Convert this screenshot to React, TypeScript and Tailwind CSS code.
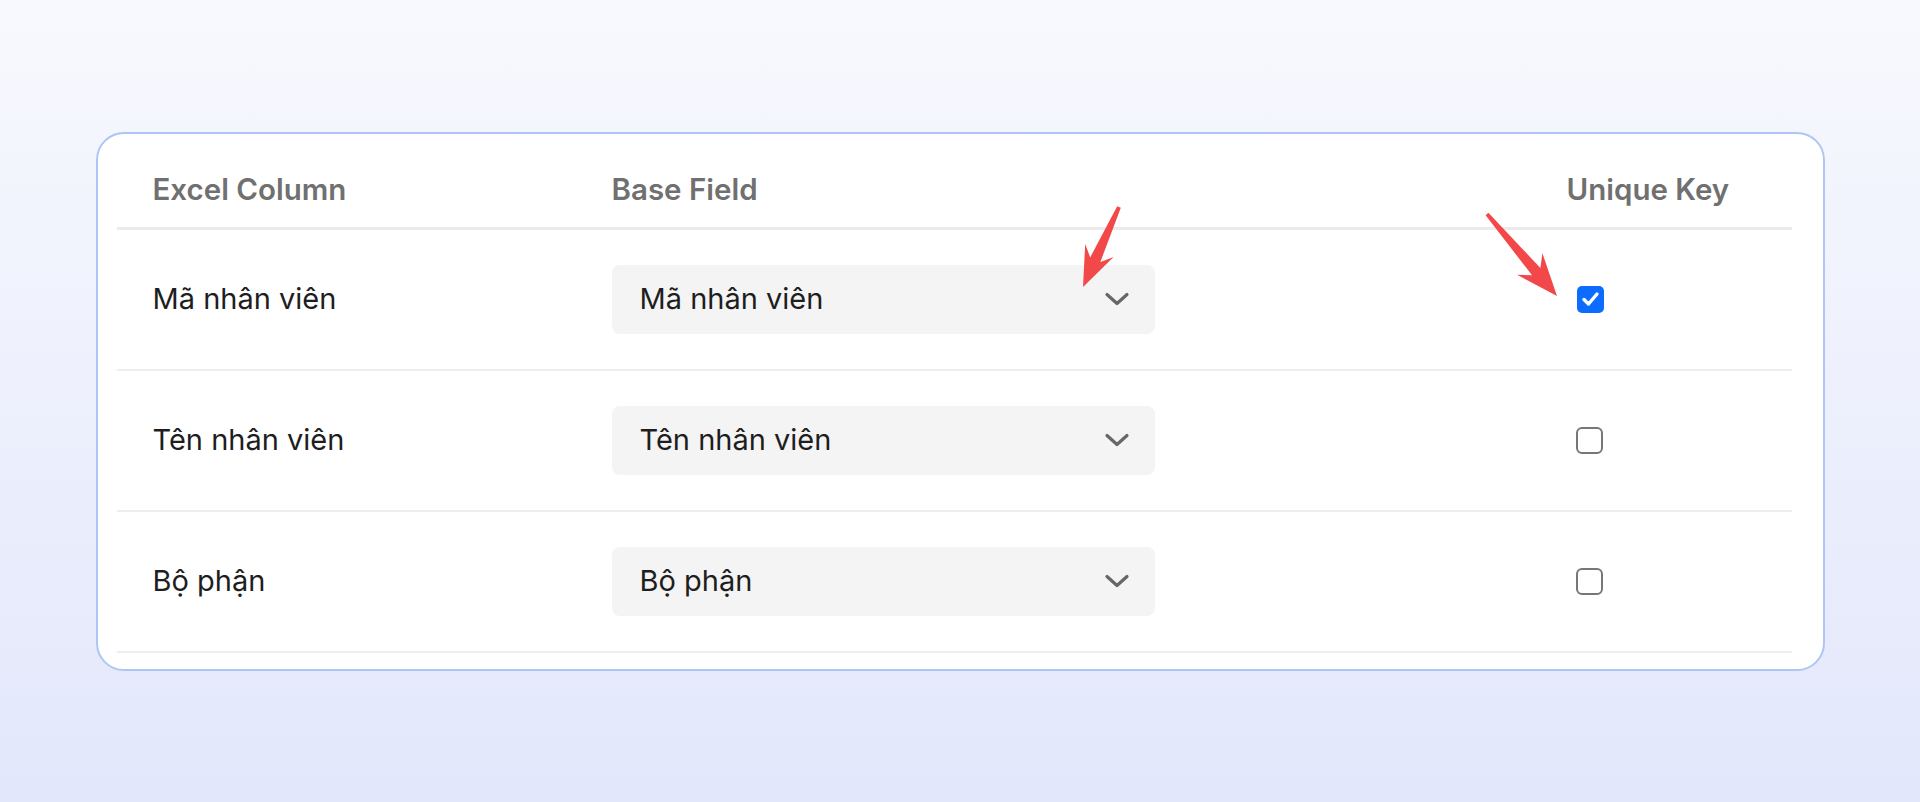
const rows = [
  { column: "Mã nhân viên", field: "Mã nhân viên", unique: true },
  { column: "Tên nhân viên", field: "Tên nhân viên", unique: false },
  { column: "Bộ phận", field: "Bộ phận", unique: false },
];

const cols = "grid grid-cols-[459px_955px_1fr]";

function Chevron() {
  return (
    <svg width="26" height="14" viewBox="0 0 26 14" fill="none" className="shrink-0">
      <polyline points="3,2.5 13,11.5 23,2.5" stroke="#676767" strokeWidth="3.2" strokeLinecap="round" strokeLinejoin="round" />
    </svg>
  );
}

function Checkbox({ checked }: { checked: boolean }) {
  if (checked) {
    return (
      <span className="ml-[10px] flex h-[27px] w-[27px] items-center justify-center rounded-[5px] bg-[#0b6cff]">
        <svg width="19" height="16" viewBox="0 0 19 16" fill="none">
          <polyline points="3,8.5 7.5,13 16,3" stroke="white" strokeWidth="3.4" strokeLinecap="round" strokeLinejoin="round" />
        </svg>
      </span>
    );
  }
  return <span className="ml-[9px] block h-[27px] w-[27px] rounded-[6px] border-2 border-[#777777] bg-white" />;
}

function Arrows() {
  return (
    <svg className="pointer-events-none absolute left-0 top-0" width="1920" height="802" viewBox="0 0 1920 802">
      <polygon
        fill="#f2484a"
        points="1120.8,207.8 1100.4,261.9 1113.6,256.9 1083,287 1085.2,244.1 1090.2,257.4 1117.2,206.2"
      />
      <polygon
        fill="#f2484a"
        points="1488.4,212.7 1540.4,268 1542.4,253.2 1557,296 1517,274.8 1532,275.2 1485.6,215.3"
      />
    </svg>
  );
}

export default function App() {
  return (
    <div className="relative flex h-[802px] w-full items-center justify-center bg-linear-to-b from-[#f8f9fe] to-[#e2e7fb] font-['Inter',sans-serif]">
      <div className="w-[1729px] rounded-[28px] border-2 border-[#adc6f6] bg-white pb-[16px] pl-[19px] pr-[31px] pt-[18px]">
        <div className={`${cols} h-[78px] items-center border-b-[3px] border-[#ebebeb] text-[29.5px] font-semibold text-[#707070]`}>
          <div className="pl-[36px]">Excel Column</div>
          <div className="pl-[36px]">Base Field</div>
          <div className="pl-[36px]">Unique Key</div>
        </div>
        {rows.map((row) => (
          <div key={row.column} className={`${cols} h-[141px] items-center border-b-2 border-[#eeeeee] text-[29px] text-[#1e1e1e]`}>
            <div className="pl-[36px]">{row.column}</div>
            <div className="pl-[36px]">
              <div className="flex h-[69px] w-[543px] items-center justify-between rounded-[8px] bg-[#f4f4f4] pl-[28px] pr-[25px]">
                <span>{row.field}</span>
                <Chevron />
              </div>
            </div>
            <div className="pl-[36px]">
              <Checkbox checked={row.unique} />
            </div>
          </div>
        ))}
      </div>
      <Arrows />
    </div>
  );
}
